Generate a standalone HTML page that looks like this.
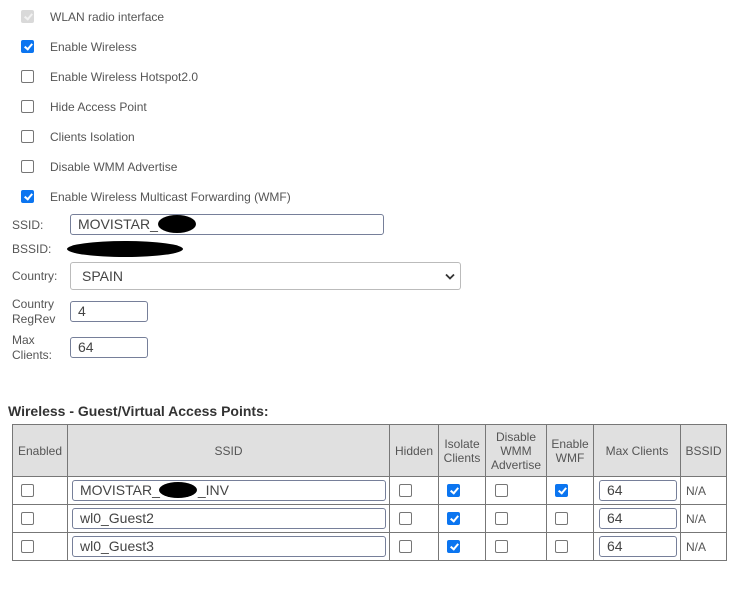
<!DOCTYPE html>
<html><head><meta charset="utf-8"><style>
body{margin:0;width:748px;height:598px;background:#fff;font-family:"Liberation Sans",sans-serif;font-size:12px;color:#555;position:relative;overflow:hidden}
.a{position:absolute}
.cb{position:absolute;width:11px;height:11px;border:1px solid #767676;border-radius:2px;background:#fff}
.cb.on{background:#0b75f0;border-color:#0b75f0}
.cb.on::after{content:"";position:absolute;left:3.5px;top:0.5px;width:3px;height:6px;border:solid #fff;border-width:0 2px 2px 0;transform:rotate(40deg)}
.cb.dis{background:#d9d9d9;border-color:#d9d9d9}
.cb.dis::after{content:"";position:absolute;left:3.5px;top:0.5px;width:3px;height:6px;border:solid #f2f2f2;border-width:0 2px 2px 0;transform:rotate(40deg)}
.lbl{position:absolute;left:50px;font-size:12px;color:#555}
.in{position:absolute;border:1px solid #767f99;border-radius:3px;box-sizing:border-box;font-size:14px;color:#444;padding-left:7px;line-height:19px;background:#fff}
.blob{position:absolute;background:#000;border-radius:50%}
.th,.td{position:absolute;box-sizing:border-box;border-right:1px solid #777;border-bottom:1px solid #777;display:flex;align-items:center;justify-content:center;text-align:center;font-size:12px;color:#555;line-height:14px}
.th{background:#e0e0e0}
</style></head><body>
<div class="cb dis" style="left:21px;top:10px"></div><div class="lbl" style="top:10px">WLAN radio interface</div>
<div class="cb on" style="left:21px;top:40px"></div><div class="lbl" style="top:40px">Enable Wireless</div>
<div class="cb" style="left:21px;top:70px"></div><div class="lbl" style="top:70px">Enable Wireless Hotspot2.0</div>
<div class="cb" style="left:21px;top:100px"></div><div class="lbl" style="top:100px">Hide Access Point</div>
<div class="cb" style="left:21px;top:130px"></div><div class="lbl" style="top:130px">Clients Isolation</div>
<div class="cb" style="left:21px;top:160px"></div><div class="lbl" style="top:160px">Disable WMM Advertise</div>
<div class="cb on" style="left:21px;top:190px"></div><div class="lbl" style="top:190px">Enable Wireless Multicast Forwarding (WMF)</div>

<div class="a" style="left:12px;top:218px">SSID:</div>
<div class="in" style="left:70px;top:214px;width:314px;height:21px">MOVISTAR_</div>
<div class="blob" style="left:158px;top:215px;width:38px;height:18px"></div>
<div class="a" style="left:12px;top:242px">BSSID:</div>
<div class="blob" style="left:67px;top:241px;width:116px;height:16px"></div>
<div class="a" style="left:12px;top:269px">Country:</div>
<div class="in" style="left:70px;top:262px;width:391px;height:28px;border-color:#bbb;line-height:26px;padding-left:11px">SPAIN
<svg class="a" style="right:5px;top:10px" width="10" height="7" viewBox="0 0 10 7"><path d="M1 1.5L5 5.5L9 1.5" stroke="#333" stroke-width="1.8" fill="none"/></svg></div>
<div class="a" style="left:12px;top:297px;line-height:15px">Country<br>RegRev</div>
<div class="in" style="left:70px;top:301px;width:78px;height:21px">4</div>
<div class="a" style="left:12px;top:333px;line-height:15px">Max<br>Clients:</div>
<div class="in" style="left:70px;top:337px;width:78px;height:21px">64</div>

<div class="a" style="left:8px;top:403px;font-size:14px;font-weight:bold;color:#333">Wireless - Guest/Virtual Access Points:</div>

<div class="a" style="left:12px;top:424px;width:715px;height:137px;border-left:1px solid #777;border-top:1px solid #777;box-sizing:border-box"></div>
<div class="th" style="left:13px;top:425px;width:55px;height:52px">Enabled</div>
<div class="th" style="left:68px;top:425px;width:322px;height:52px">SSID</div>
<div class="th" style="left:390px;top:425px;width:49px;height:52px">Hidden</div>
<div class="th" style="left:439px;top:425px;width:47px;height:52px">Isolate<br>Clients</div>
<div class="th" style="left:486px;top:425px;width:61px;height:52px">Disable<br>WMM<br>Advertise</div>
<div class="th" style="left:547px;top:425px;width:47px;height:52px">Enable<br>WMF</div>
<div class="th" style="left:594px;top:425px;width:87px;height:52px">Max Clients</div>
<div class="th" style="left:681px;top:425px;width:46px;height:52px">BSSID</div>

<!-- rows -->
<div class="td" style="left:13px;top:477px;width:55px;height:28px"></div>
<div class="td" style="left:68px;top:477px;width:322px;height:28px"></div>
<div class="td" style="left:390px;top:477px;width:49px;height:28px"></div>
<div class="td" style="left:439px;top:477px;width:47px;height:28px"></div>
<div class="td" style="left:486px;top:477px;width:61px;height:28px"></div>
<div class="td" style="left:547px;top:477px;width:47px;height:28px"></div>
<div class="td" style="left:594px;top:477px;width:87px;height:28px"></div>
<div class="td" style="left:681px;top:477px;width:46px;height:28px"></div>
<div class="td" style="left:13px;top:505px;width:55px;height:28px"></div>
<div class="td" style="left:68px;top:505px;width:322px;height:28px"></div>
<div class="td" style="left:390px;top:505px;width:49px;height:28px"></div>
<div class="td" style="left:439px;top:505px;width:47px;height:28px"></div>
<div class="td" style="left:486px;top:505px;width:61px;height:28px"></div>
<div class="td" style="left:547px;top:505px;width:47px;height:28px"></div>
<div class="td" style="left:594px;top:505px;width:87px;height:28px"></div>
<div class="td" style="left:681px;top:505px;width:46px;height:28px"></div>
<div class="td" style="left:13px;top:533px;width:55px;height:28px"></div>
<div class="td" style="left:68px;top:533px;width:322px;height:28px"></div>
<div class="td" style="left:390px;top:533px;width:49px;height:28px"></div>
<div class="td" style="left:439px;top:533px;width:47px;height:28px"></div>
<div class="td" style="left:486px;top:533px;width:61px;height:28px"></div>
<div class="td" style="left:547px;top:533px;width:47px;height:28px"></div>
<div class="td" style="left:594px;top:533px;width:87px;height:28px"></div>
<div class="td" style="left:681px;top:533px;width:46px;height:28px"></div>

<div class="cb" style="left:21px;top:484px"></div>
<div class="in" style="left:72px;top:480px;width:314px;height:21px;font-size:14px">MOVISTAR_<span style="display:inline-block;width:38px"></span>_INV</div>
<div class="blob" style="left:159px;top:482px;width:38px;height:16px"></div>
<div class="cb" style="left:399px;top:484px"></div>
<div class="cb on" style="left:447px;top:484px"></div>
<div class="cb" style="left:495px;top:484px"></div>
<div class="cb on" style="left:555px;top:484px"></div>
<div class="in" style="left:599px;top:480px;width:78px;height:21px">64</div>
<div class="a" style="left:686px;top:484px">N/A</div>

<div class="cb" style="left:21px;top:512px"></div>
<div class="in" style="left:72px;top:508px;width:314px;height:21px">wl0_Guest2</div>
<div class="cb" style="left:399px;top:512px"></div>
<div class="cb on" style="left:447px;top:512px"></div>
<div class="cb" style="left:495px;top:512px"></div>
<div class="cb" style="left:555px;top:512px"></div>
<div class="in" style="left:599px;top:508px;width:78px;height:21px">64</div>
<div class="a" style="left:686px;top:512px">N/A</div>

<div class="cb" style="left:21px;top:540px"></div>
<div class="in" style="left:72px;top:536px;width:314px;height:21px">wl0_Guest3</div>
<div class="cb" style="left:399px;top:540px"></div>
<div class="cb on" style="left:447px;top:540px"></div>
<div class="cb" style="left:495px;top:540px"></div>
<div class="cb" style="left:555px;top:540px"></div>
<div class="in" style="left:599px;top:536px;width:78px;height:21px">64</div>
<div class="a" style="left:686px;top:540px">N/A</div>
</body></html>
